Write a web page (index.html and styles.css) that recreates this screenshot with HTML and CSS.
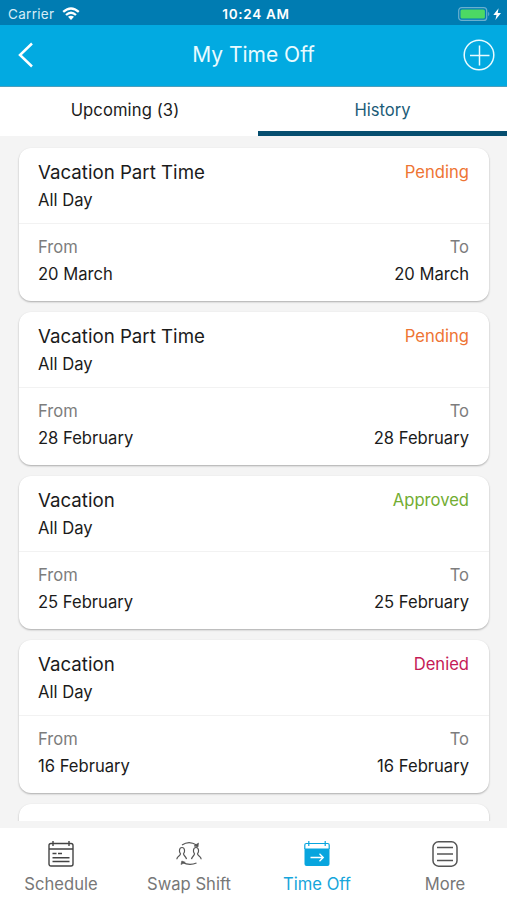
FILE: index.html
```html
<!DOCTYPE html>
<html lang="en">
<head>
<meta charset="utf-8">
<title>My Time Off</title>
<link rel="stylesheet" href="styles.css">
</head>
<body>
<div class="status">
  <div class="status-left"><span>Carrier</span>
    <svg width="18" height="14" viewBox="0 0 18 14" fill="none" stroke="#fff" stroke-width="2.3"><path d="M1.2 4.9Q9-2 16.8 4.9M4 8Q9 3.5 14 8"/><path d="M9 13 6 9.8Q9 7.5 12 9.8Z" fill="#fff" stroke="none"/></svg>
  </div>
  <span class="clock">10:24 AM</span>
  <div class="status-right">
    <svg width="45" height="16" viewBox="0 0 45 16"><rect x="1.7" y="1.6" width="28" height="12.8" rx="3" fill="none" stroke="#69b0cf" stroke-width="1.2"/><rect x="3.5" y="3.4" width="24.4" height="9.2" rx="1.5" fill="#4cd964"/><path d="M31.2 5.7q2.2 2.2 0 4.6z" fill="#69b0cf"/><path d="M41.6 2.3 36.3 9h3.2l-1.1 5.1L44 7h-3.3z" fill="#fff"/></svg>
  </div>
</div>
<header class="bar">
  <svg class="back" width="16" height="26" viewBox="0 0 16 26" fill="none" stroke="#fff" stroke-width="2.5"><path d="M14 1.5 2 13l12 11.5"/></svg>
  <h1>My Time Off</h1>
  <svg class="add" width="32" height="32" viewBox="0 0 32 32" fill="none" stroke="#e9fbff" stroke-width="1.5"><circle cx="16" cy="16" r="14.8"/><path d="M16.5 6.5v20M7 16.5h19.5"/></svg>
</header>
<nav class="tabs"><div class="tab">Upcoming (3)</div><div class="tab active">History</div></nav>
<main class="list">
  <article class="card">
    <div class="head"><div><h2>Vacation Part Time</h2><p>All Day</p></div><span class="state pending">Pending</span></div>
    <div class="dates"><div><label>From</label><p>20 March</p></div><div class="to"><label>To</label><p>20 March</p></div></div>
  </article>
  <article class="card">
    <div class="head"><div><h2>Vacation Part Time</h2><p>All Day</p></div><span class="state pending">Pending</span></div>
    <div class="dates"><div><label>From</label><p>28 February</p></div><div class="to"><label>To</label><p>28 February</p></div></div>
  </article>
  <article class="card">
    <div class="head"><div><h2>Vacation</h2><p>All Day</p></div><span class="state approved">Approved</span></div>
    <div class="dates"><div><label>From</label><p>25 February</p></div><div class="to"><label>To</label><p>25 February</p></div></div>
  </article>
  <article class="card">
    <div class="head"><div><h2>Vacation</h2><p>All Day</p></div><span class="state denied">Denied</span></div>
    <div class="dates"><div><label>From</label><p>16 February</p></div><div class="to"><label>To</label><p>16 February</p></div></div>
  </article>
  <article class="card"></article>
</main>
<footer class="dock">
  <div class="item">
    <svg width="26" height="26" viewBox="0 0 26 26" fill="none" stroke="#444" stroke-width="1.4"><rect x="1" y="2.5" width="24" height="22.5" rx="2"/><path d="M1 8h24M5 0v5M21 0v5"/><path d="M4.5 12.5h4M10 12.5h4M4.500 16.700h17M4.500 20.500h17" stroke-width="1.6"/></svg>
    <span>Schedule</span>
  </div>
  <div class="item">
    <svg width="26" height="26" viewBox="0 0 26 26" fill="none" stroke="#555" stroke-width="1.2"><path d="M.8 18.2C1 15 4.500 15 4.500 12.800 2.800 11 3 6.500 6 6.500s3.200 4.500 1.500 6.300c0 2.200 2.500 2.200 3 5.400M15.500 18.200c.5-3.200 3-3.200 3-5.400-1.700-1.800-1.500-6.300 1.500-6.300s3.200 4.500 1.500 6.300c0 2.200 3.500 2.200 3.700 5.400"/><path d="M6 4Q13-.8 20.500 4M20.500 22Q13.500 25 6.500 21.500"/><path d="m22.500 2-.5 4-4-1zM5 23.500l.8-3.500 3.500 1.300z" fill="#555" stroke-width=".6"/></svg>
    <span>Swap Shift</span>
  </div>
  <div class="item current">
    <svg width="26" height="26" viewBox="0 0 26 26" fill="none" stroke="#08a5de" stroke-width="1.2"><path d="M.8 8V4q0-1.500 1.500-1.500h21.400q1.500 0 1.500 1.500v4M4.800 0v5M21.200 0v5"/><path d="M.5 7.500h25V23q0 2-2 2h-21q-2 0-2-2z" fill="#08a5de" stroke="none"/><path d="M6.500 16.500h12.500M15.500 12.700l3.800 3.800-3.800 3.800" stroke="#fff" stroke-width="1.300"/></svg>
    <span>Time Off</span>
  </div>
  <div class="item">
    <svg width="26" height="26" viewBox="0 0 26 26" fill="none" stroke="#555" stroke-width="1.500"><rect x="1" y=".8" width="24" height="24.400" rx="5.500"/><path d="M5 6.500h16M5 13h16M5 19.500h16" stroke-width="1.700"/></svg>
    <span>More</span>
  </div>
</footer>
</body>
</html>
```
FILE: styles.css
```css
* { box-sizing: border-box; margin: 0; padding: 0; }
body {
  width: 507px; height: 900px; overflow: hidden;
  display: flex; flex-direction: column;
  font-family: Inter, "Liberation Sans", sans-serif;
  font-size: 16.6px; color: #1b1b1b; background: #f4f4f4;
}
svg { display: block; flex: none; }
.status {
  height: 25px; flex: none; display: grid; grid-template-columns: 1fr auto 1fr; align-items: center;
  padding: 2px 5px 0 8px; background: #007cb2; color: #fff; font-size: 13.5px;
}
.status-left { display: flex; align-items: center; gap: 8px; color: #d5edf7; letter-spacing: .3px; }
.clock { font-weight: 600; letter-spacing: .7px; padding-left: 2px; }
.status-right { display: flex; justify-content: flex-end; }
.bar {
  height: 62px; flex: none; display: grid; grid-template-columns: 32px 1fr 32px; align-items: center;
  padding: 0 12px 2px 18px; background: #02aae1; border-bottom: 1px solid #4b9fbd;
}
.bar h1 { padding-right: 6px; text-align: center; font-size: 21px; font-weight: 400; color: #e9fbff; }
.tabs { height: 49px; flex: none; display: grid; grid-template-columns: 258px 249px; background: #fff; }
.tab { padding-top: 12px; line-height: 22px; text-align: center; border-bottom: 0 solid #064e6f; }
.tab:first-child { padding-right: 8px; letter-spacing: .1px; }
.active { color: #1d5c78; border-bottom-width: 5px; }
.list { height: 685px; flex: none; overflow: hidden; display: flex; flex-direction: column; gap: 11px; padding: 12px 18px 0 19px; }
.card { height: 153px; flex: none; border-radius: 12px; background: #fff; box-shadow: 0 1px 2px rgba(0, 0, 0, .3); }
.head { height: 76px; padding: 12px 20px 0 19px; display: flex; justify-content: space-between; border-bottom: 1px solid #f2f2f2; }
.head h2 { font-size: 18.7px; font-weight: 400; line-height: 26px; }
.head p { line-height: 29px; }
.state { line-height: 25px; }
.pending { color: #ee7433; }
.approved { color: #72ad32; }
.denied { color: #c51b56; }
.dates { padding: 10px 20px 0 19px; display: flex; justify-content: space-between; line-height: 27px; }
.dates label { display: block; color: #7d7d7d; }
.to { text-align: right; }
.dock { flex: 1; margin: 7px -2px 0 -3px; display: flex; background: #fff; }
.item { flex: 1; display: flex; flex-direction: column; align-items: center; gap: 5px; padding-top: 13px; color: #777; }
.item span { line-height: 24px; }
.current { color: #15a5db; }
```
